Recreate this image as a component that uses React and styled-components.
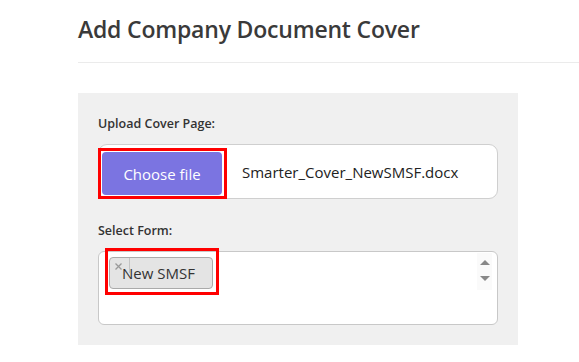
import React from 'react';
import styled, { createGlobalStyle } from 'styled-components';

const GlobalStyle = createGlobalStyle`
  body {
    margin: 0;
    background: #fff;
    font-family: 'Open Sans', 'Noto Sans', sans-serif;
    color: #333;
  }
`;

const Page = styled.div`
  padding-left: 78px;
  padding-top: 12px;
`;

const Header = styled.div`
  border-bottom: 1px solid #ebebeb;
  padding-bottom: 16px;
`;

const Title = styled.h1`
  margin: 0;
  font-size: 23px;
  font-weight: 600;
  line-height: 34px;
  color: #3a3a3a;
  letter-spacing: -0.2px;
`;

const Panel = styled.div`
  margin-top: 30px;
  width: 400px;
  padding: 22px 20px 20px 20px;
  background: #f0f0f0;
`;

const Field = styled.div`
  display: flex;
  flex-direction: column;
  gap: 11px;
  & + & {
    margin-top: 23px;
  }
`;

const Label = styled.label`
  font-size: 12.5px;
  font-weight: 600;
  color: #333;
  line-height: 18px;
`;

const FileBox = styled.div`
  display: flex;
  align-items: flex-start;
  gap: 15px;
  height: 55px;
  box-sizing: border-box;
  padding: 3px 0 0 0;
  background: #fff;
  border: 1px solid #cfcfcf;
  border-radius: 9px;
`;

const Highlight = styled.div`
  display: inline-flex;
  border: 3px solid #ff0000;
  padding: ${p => p.$pad || '0'};
  margin: ${p => p.$margin || '0'};
`;

const ChooseButton = styled.button`
  width: 120px;
  height: 43px;
  margin: 0;
  border: none;
  border-radius: 4px;
  background: #7b74e1;
  color: #fff;
  font-family: inherit;
  font-size: 15px;
`;

const FileName = styled.span`
  align-self: center;
  margin-top: -2px;
  font-size: 15px;
  color: #222;
`;

const SelectBox = styled.div`
  position: relative;
  height: 74px;
  box-sizing: border-box;
  padding: 0 0 0 6px;
  background: #fff;
  border: 1px solid #c8c8c8;
  border-radius: 6px;
`;

const Tags = styled.div`
  display: flex;
  margin-top: -4px;
`;

const Tag = styled.div`
  position: relative;
  width: 104px;
  height: 32px;
  box-sizing: border-box;
  display: flex;
  align-items: center;
  padding-left: 12px;
  background: #e4e4e4;
  border: 1px solid #aaa;
  border-radius: 4px;
  font-size: 15px;
  color: #333;
`;

const Remove = styled.span`
  position: absolute;
  left: 0;
  top: 0;
  width: 19px;
  height: 15px;
  border-right: 1px solid #c4c4c4;
  & svg {
    position: absolute;
    left: 5px;
    top: 5px;
  }
`;

const Spinner = styled.div`
  position: absolute;
  right: 5px;
  top: 1px;
  width: 15px;
  height: 37px;
  background: #fafafa;
  display: flex;
  flex-direction: column;
  align-items: center;
  justify-content: space-between;
  padding: 7px 0 9px;
  box-sizing: border-box;
`;

const Arrow = styled.span`
  width: 0;
  height: 0;
  border-left: 5px solid transparent;
  border-right: 5px solid transparent;
  ${p => (p.$down ? 'border-top: 5px solid #888;' : 'border-bottom: 5px solid #888;')}
`;

const CloseIcon = () => (
  <svg width="7" height="7" viewBox="0 0 7 7">
    <path d="M0.5 0.5 L6.5 6.5 M6.5 0.5 L0.5 6.5" stroke="#9a9a9a" strokeWidth="1.3" />
  </svg>
);

export default function App() {
  return (
    <>
      <GlobalStyle />
      <Page>
        <Header>
          <Title>Add Company Document Cover</Title>
        </Header>
        <Panel>
          <Field>
            <Label>Upload Cover Page:</Label>
            <FileBox>
              <Highlight $pad="1px 2px 1px 1px" $margin="0 0 0 -1px">
                <ChooseButton>Choose file</ChooseButton>
              </Highlight>
              <FileName>Smarter_Cover_NewSMSF.docx</FileName>
            </FileBox>
          </Field>
          <Field>
            <Label>Select Form:</Label>
            <SelectBox>
              <Tags>
                <Highlight $pad="6px 3px 3px 1px">
                  <Tag>
                    <Remove>
                      <CloseIcon />
                    </Remove>
                    New SMSF
                  </Tag>
                </Highlight>
              </Tags>
              <Spinner>
                <Arrow />
                <Arrow $down />
              </Spinner>
            </SelectBox>
          </Field>
        </Panel>
      </Page>
    </>
  );
}
